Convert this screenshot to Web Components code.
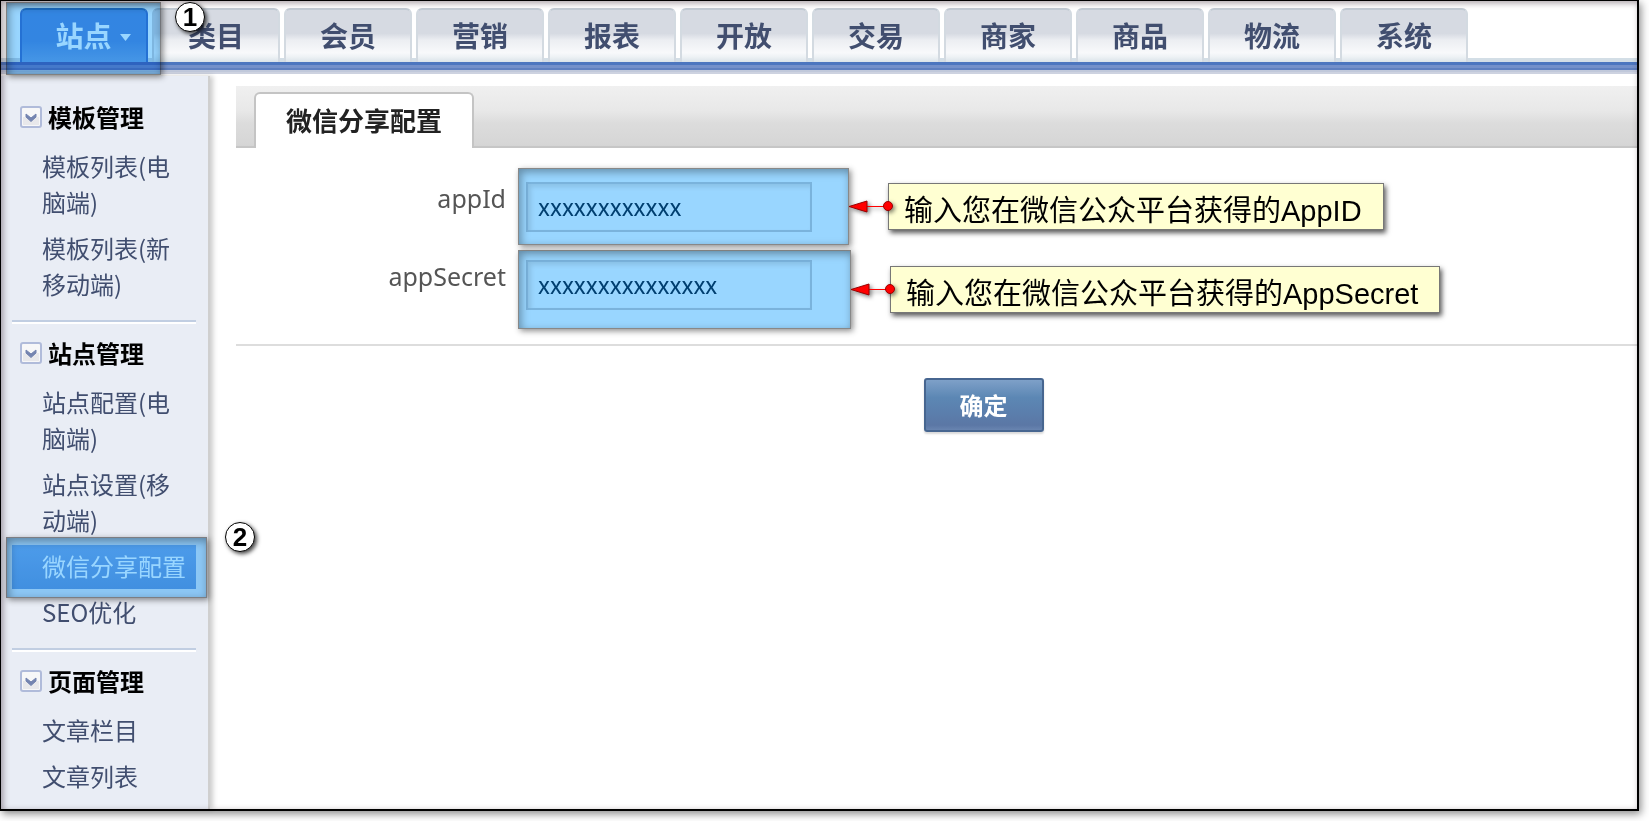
<!DOCTYPE html>
<html lang="zh-CN">
<head>
<meta charset="utf-8">
<title>微信分享配置</title>
<style>
  body {
    margin: 0;
    background: #fff;
    font-family: "Noto Sans CJK SC", sans-serif;
    font-size: 24px;
    color: #414e6f;
  }
</style>
</head>
<body>
<admin-frame>
  <nav-bar slot="nav">
    <nav-tab active>站点</nav-tab>
    <nav-tab>类目</nav-tab>
    <nav-tab>会员</nav-tab>
    <nav-tab>营销</nav-tab>
    <nav-tab>报表</nav-tab>
    <nav-tab>开放</nav-tab>
    <nav-tab>交易</nav-tab>
    <nav-tab>商家</nav-tab>
    <nav-tab>商品</nav-tab>
    <nav-tab>物流</nav-tab>
    <nav-tab>系统</nav-tab>
  </nav-bar>
  <side-bar slot="side">
    <side-section heading="模板管理">
      <side-link>模板列表(电脑端)</side-link>
      <side-link>模板列表(新移动端)</side-link>
    </side-section>
    <side-section heading="站点管理">
      <side-link>站点配置(电脑端)</side-link>
      <side-link>站点设置(移动端)</side-link>
      <side-link active>微信分享配置</side-link>
      <side-link>SEO优化</side-link>
    </side-section>
    <side-section heading="页面管理">
      <side-link>文章栏目</side-link>
      <side-link>文章列表</side-link>
    </side-section>
  </side-bar>
  <config-panel heading="微信分享配置">
    <config-field label="appId" value="xxxxxxxxxxxx" style="--mark:-14px -37px -13px -8px;--reach:36px;--note-top:1px">输入您在微信公众平台获得的AppID</config-field>
    <config-field label="appSecret" value="xxxxxxxxxxxxxxx" style="--mark:-10px -39px -19px -8px;--reach:38px;--note-top:6px">输入您在微信公众平台获得的AppSecret</config-field>
    <primary-button slot="actions">确定</primary-button>
  </config-panel>
</admin-frame>

<script>
const define = (name, html, setup) => {
  const template = document.createElement('template');
  template.innerHTML = html;
  customElements.define(name, class extends HTMLElement {
    constructor() {
      super();
      this.attachShadow({ mode: 'open' }).append(template.content.cloneNode(true));
    }
    connectedCallback() {
      if (setup) setup(this, this.shadowRoot);
    }
  });
};

/* Multiplied blue marker laid over the things the guide points at. */
const markCss = `
  .mark {
    position: absolute;
    box-sizing: border-box;
    z-index: 3;
    border: 1px solid #888;
    background: #99d6ff;
    box-shadow: inset 2px 3px 8px rgba(0,0,0,.35), 2px 2px 6px rgba(0,0,0,.45);
    mix-blend-mode: multiply;
    pointer-events: none;
  }`;

define('admin-frame', `
  <style>
    :host {
      display: flex;
      flex-direction: column;
      position: relative;
      box-sizing: border-box;
      min-height: calc(100vh - 10px);
      margin: 0 10px 10px 0;
      border: solid #000;
      border-width: 1px 2px 2px 1px;
      box-shadow: 2px 3px 8px rgba(0,0,0,.45);
    }
    :host::after {
      content: "";
      position: absolute;
      inset: 0;
      z-index: 2;
      box-shadow: inset 2px 2px 6px rgba(60,40,50,.45);
      pointer-events: none;
    }
    .body { display: flex; flex: 1; padding-top: 2px; }
    main { flex: 1; min-width: 0; }
  </style>
  <slot name="nav"></slot>
  <div class="body">
    <slot name="side"></slot>
    <main><slot></slot></main>
  </div>`);

define('nav-bar', `
  <style>
    :host { display: block; }
    nav {
      display: flex;
      gap: 4px;
      padding: 7px 0 0 19px;
      background: linear-gradient(#0000 57px, #d3dee6 57px);
    }
    .rule {
      height: 12px;
      background: linear-gradient(#4c76bf 3px, #7390ca 3px 6px, #5f80c0 6px 8px, #c0c8da 8px 10px, #cdd2e0 10px);
    }
  </style>
  <nav><slot></slot></nav>
  <div class="rule"></div>`);

define('nav-tab', `
  <style>
    :host { display: block; position: relative; flex: 0 0 128px; }
    a {
      display: flex;
      align-items: center;
      justify-content: center;
      box-sizing: border-box;
      height: 54px;
      padding-bottom: 2px;
      border: 2px solid;
      border-bottom: 0;
      border-radius: 6px 6px 0 0;
      border-color: #c3ccd5 #d3dae1 #fff;
      background: linear-gradient(#d6dae2 45%, #eceef2 58%, #f8f9fb 82%, #eef2f5 90%, #dae3e9);
      color: #414e6f;
      font-size: 28px;
      line-height: 40px;
      font-weight: 700;
      text-decoration: none;
    }
    .caret, .mark, .step { display: none; }
    :host([active]) a {
      gap: 8px;
      padding-left: 18px;
      border-color: #2e86c8 #3c86d4 #3c86d4;
      background: linear-gradient(#549fe2, #549fe1 60%, #74b3e6);
      color: #fff;
    }
    :host([active]) .caret { display: block; margin-top: 4px; }
    :host([active]) .mark { display: block; inset: -6px -13px -13px -14px; }
    :host([active]) .step { display: block; position: absolute; top: -6px; left: 155px; z-index: 4; }
    ${markCss}
  </style>
  <a href="#"><slot></slot><svg class="caret" width="11" height="7" viewBox="0 0 11 7"><path d="M0 0h11L5.500 7z" fill="#fff"/></svg></a>
  <span class="mark"></span>
  <step-badge class="step" number="1"></step-badge>`);

define('step-badge', `
  <style>
    :host { display: block; width: 30px; height: 30px; }
    span {
      display: flex;
      align-items: center;
      justify-content: center;
      box-sizing: border-box;
      width: 30px;
      height: 30px;
      border: 1px solid #000;
      border-radius: 50%;
      background: #fff;
      box-shadow: 2px 2px 4px rgba(0,0,0,.75);
      color: #000;
      font: 700 26px/26px "Liberation Sans", sans-serif;
    }
  </style>
  <span></span>`, (host, root) => {
  root.querySelector('span').textContent = host.getAttribute('number');
});

define('side-bar', `
  <style>
    :host {
      display: block;
      box-sizing: border-box;
      flex: 0 0 209px;
      padding: 12px 12px 0 11px;
      border-right: 2px solid #cfcfcf;
      background: #e9edf5;
      box-shadow: 3px 0 5px rgba(0,0,0,.2);
    }
  </style>
  <slot></slot>`);

define('side-section', `
  <style>
    :host { display: block; padding: 11px 0; }
    :host(:not(:last-child)) {
      border-bottom: 2px solid #c1cee2;
      box-shadow: 0 2px #fff;
      margin-bottom: 2px;
    }
    :host(:last-child) { padding-bottom: 0; }
    h2 {
      display: flex;
      align-items: center;
      gap: 6px;
      margin: 0 0 10px;
      padding-left: 8px;
      color: #000;
      font-size: 24px;
      line-height: 36px;
    }
    button {
      display: block;
      width: 22px;
      height: 22px;
      padding: 0;
      border: 0;
      background: none;
    }
    svg { display: block; }
  </style>
  <h2><button type="button" aria-label="收起"><svg width="22" height="22" viewBox="0 0 22 22"><rect x="1" y="1" width="20" height="20" rx="2" fill="#f7f7f8" stroke="#b0bbda" stroke-width="2"/><path d="M3 11h16v8H3z" fill="#e8e8eb"/><path d="M6 8l5 4 5-4v3l-5 4.500-5-4.500z" fill="#7484b0" stroke="#7484b0"/></svg></button><span></span></h2>
  <slot></slot>`, (host, root) => {
  root.querySelector('span').textContent = host.getAttribute('heading');
});

define('side-link', `
  <style>
    :host { display: block; position: relative; margin: 0 0 2px; }
    a {
      display: block;
      padding: 3px 8px 5px 30px;
      color: #414e6f;
      line-height: 36px;
      text-decoration: none;
      word-break: break-all;
    }
    .mark, .step { display: none; }
    :host([active]) a { background: linear-gradient(#7fb9ea, #6cabe0); color: #fff; }
    :host([active]) .mark { display: block; inset: -8px -11px -9px -6px; }
    :host([active]) .step { display: block; position: absolute; top: -23px; left: 213px; z-index: 4; }
    ${markCss}
  </style>
  <a href="#"><slot></slot></a>
  <span class="mark"></span>
  <step-badge class="step" number="2"></step-badge>`);

define('config-panel', `
  <style>
    :host { display: block; padding: 10px 0 0 26px; }
    header {
      display: flex;
      box-sizing: border-box;
      height: 62px;
      padding: 6px 0 0 18px;
      background: linear-gradient(#f0f0f0, #e8e8e8 40%, #dcdcdc 60%, #d6d6d6 58px, #d4d4d4 60px, #c6c6c6 60px);
    }
    h1 {
      box-sizing: border-box;
      flex: 0 0 220px;
      margin: 0;
      border: 2px solid #c4c4c4;
      border-bottom: 0;
      border-radius: 6px 6px 0 0;
      background: #fff;
      color: #222;
      font-size: 26px;
      line-height: 52px;
      text-align: center;
    }
    .fields {
      display: flex;
      flex-direction: column;
      gap: 28px;
      padding: 34px 0;
      border-bottom: 2px solid #ddd;
    }
    .actions { display: flex; justify-content: center; padding: 32px 0 32px 94px; }
  </style>
  <header><h1></h1></header>
  <form>
    <div class="fields"><slot></slot></div>
    <div class="actions"><slot name="actions"></slot></div>
  </form>`, (host, root) => {
  root.querySelector('h1').textContent = host.getAttribute('heading');
});

define('config-field', `
  <style>
    :host { display: flex; gap: 20px; }
    label {
      flex: 0 0 270px;
      color: #555;
      font: 25px/32px "Noto Sans", sans-serif;
      text-align: right;
    }
    .control { position: relative; width: 286px; height: 50px; }
    input {
      display: block;
      box-sizing: border-box;
      width: 100%;
      height: 100%;
      padding: 0 10px 4px;
      border: 2px solid #cbd5dc;
      background: #fff;
      box-shadow: inset 3px 3px 5px rgba(0,0,0,.1);
      color: #004b70;
      font: 24px "Noto Sans CJK SC", sans-serif;
    }
    .mark { inset: var(--mark); }
    .callout {
      position: absolute;
      top: var(--note-top);
      left: calc(100% + var(--reach));
      display: flex;
      z-index: 4;
    }
    svg {
      display: block;
      position: relative;
      z-index: 1;
      margin-right: -5px;
      filter: drop-shadow(2px 2px 2px rgba(0,0,0,.5));
    }
    .note {
      box-sizing: border-box;
      height: 47px;
      padding: 3px 21px 0 15px;
      border: 1px solid #777;
      background: #ffffd2;
      box-shadow: 2px 3px 5px rgba(0,0,0,.65);
      color: #000;
      font: 29px/48px "Liberation Sans", "Noto Sans CJK SC", sans-serif;
      white-space: nowrap;
    }
    ${markCss}
  </style>
  <label for="input"></label>
  <div class="control">
    <input id="input" type="text">
    <span class="mark"></span>
    <div class="callout">
      <svg width="45" height="47" viewBox="0 0 45 47">
        <path d="M18 23.500h22" stroke="#f00"/>
        <path d="M1 23.500l18-5.500v11z" fill="#f00" stroke="#900"/>
        <circle cx="40" cy="23" r="4.500" fill="#f00" stroke="#900"/>
      </svg>
      <div class="note"><slot></slot></div>
    </div>
  </div>`, (host, root) => {
  root.querySelector('label').textContent = host.getAttribute('label');
  root.querySelector('input').value = host.getAttribute('value');
});

define('primary-button', `
  <style>
    :host { display: block; }
    button {
      box-sizing: border-box;
      min-width: 120px;
      height: 54px;
      padding: 0 16px;
      border: 2px solid #476690;
      border-radius: 3px;
      background: linear-gradient(#7ea0c8, #5c87b4 35%, #5b80ae 60%, #5b77a5 90%, #6884b0);
      box-shadow: 0 2px 2px rgba(0,0,0,.15);
      color: #fff;
      font: 700 24px/36px "Noto Sans CJK SC", sans-serif;
    }
  </style>
  <button type="button"><slot></slot></button>`);
</script>
</body>
</html>
